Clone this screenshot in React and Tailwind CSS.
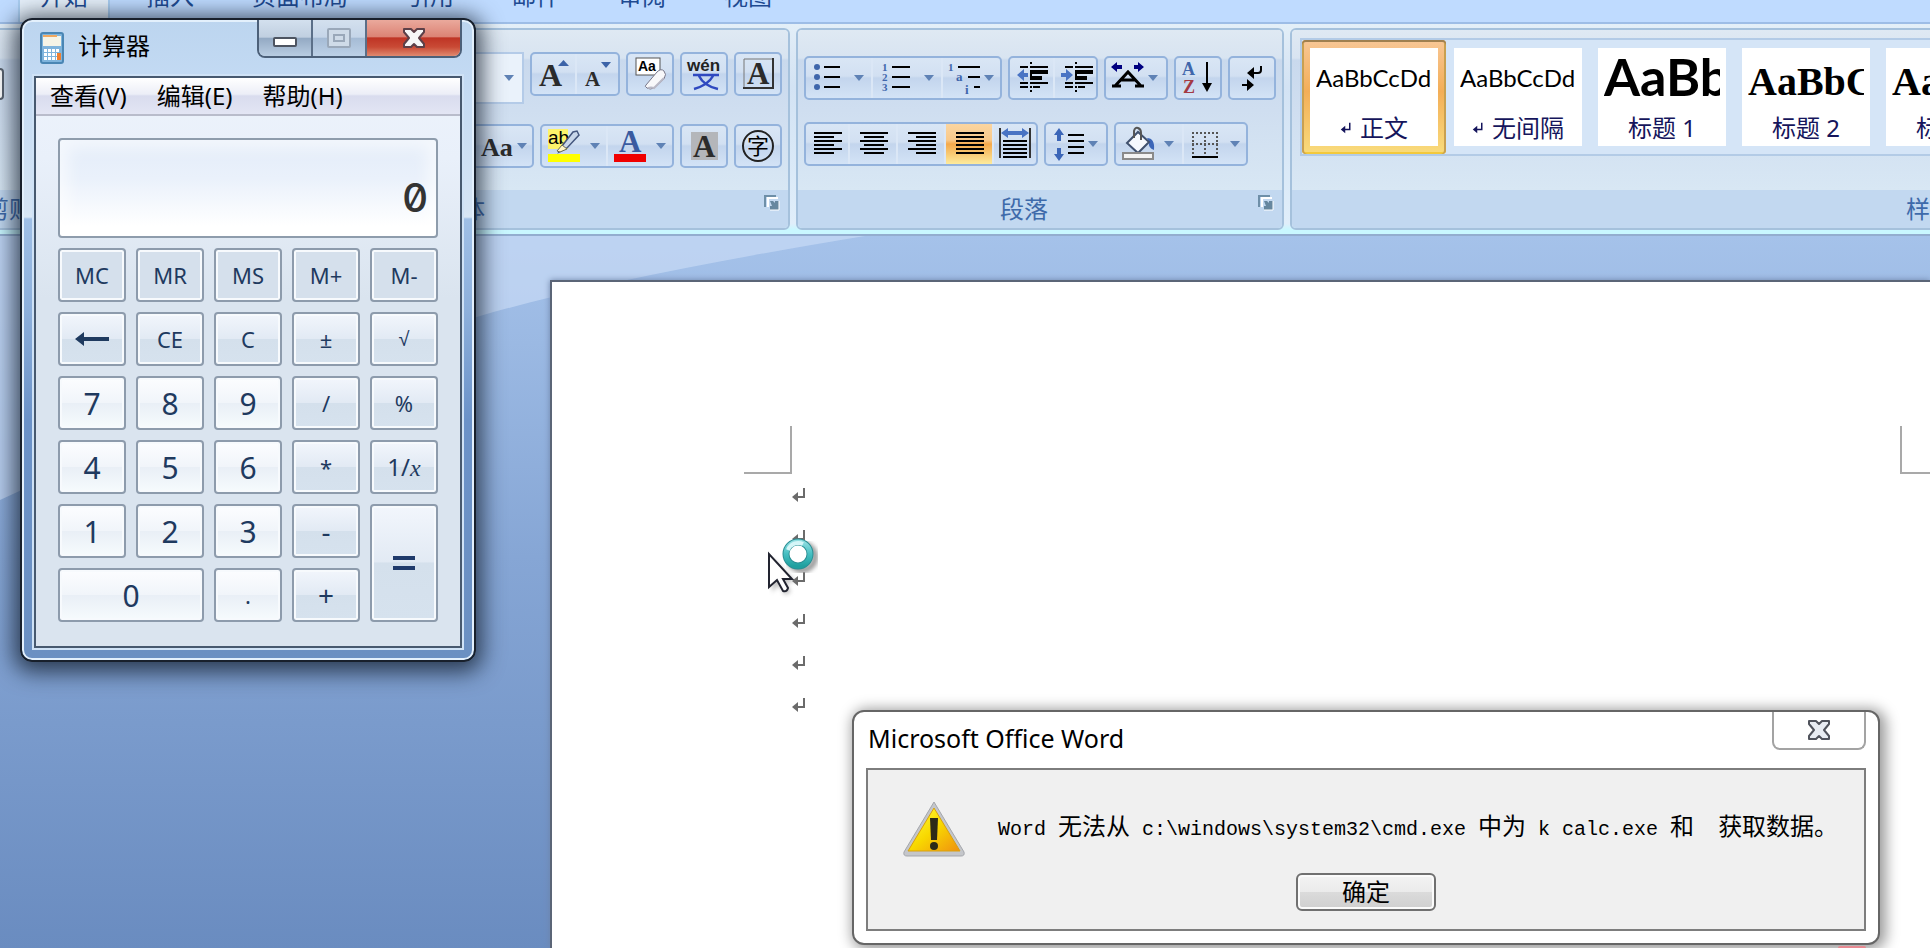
import React, { useState } from "react";

const TABS = ["开始", "插入", "页面布局", "引用", "邮件", "审阅", "视图"];

const KEYS = [
  { label: "MC", kind: "mem" },
  { label: "MR", kind: "mem" },
  { label: "MS", kind: "mem" },
  { label: "M+", kind: "mem" },
  { label: "M-", kind: "mem" },
  { label: "←", kind: "op" },
  { label: "CE", kind: "op" },
  { label: "C", kind: "op" },
  { label: "±", kind: "op" },
  { label: "√", kind: "op" },
  { label: "7", kind: "num" },
  { label: "8", kind: "num" },
  { label: "9", kind: "num" },
  { label: "/", kind: "op" },
  { label: "%", kind: "op" },
  { label: "4", kind: "num" },
  { label: "5", kind: "num" },
  { label: "6", kind: "num" },
  { label: "*", kind: "op" },
  { label: "1/x", kind: "op" },
  { label: "1", kind: "num" },
  { label: "2", kind: "num" },
  { label: "3", kind: "num" },
  { label: "-", kind: "op" },
  { label: "=", kind: "op", span: "row-span-2" },
  { label: "0", kind: "num", span: "col-span-2" },
  { label: ".", kind: "num" },
  { label: "+", kind: "op" },
];

const KEY_STYLES = {
  mem: "bg-[#d5e0ec] text-[22px]",
  op: "bg-[linear-gradient(#f2f6fc_0%,#e2eaf4_49%,#d4e0ec_50%,#d6e2ee_100%)] text-[22px]",
  num: "bg-[linear-gradient(#fcfdff_0%,#f1f5fa_49%,#e9eff6_50%,#f6fbfd_100%)] text-[30px]",
};

const STYLES = [
  { sample: "AaBbCcDd", name: "正文", mark: true, look: "text-2xl pb-1 font-['Lato',sans-serif]", selected: true },
  { sample: "AaBbCcDd", name: "无间隔", mark: true, look: "text-2xl pb-1 font-['Lato',sans-serif]" },
  { sample: "AaBbCc", name: "标题 1", look: "text-[52px] pb-2 font-bold font-['Lato',sans-serif]" },
  { sample: "AaBbCc", name: "标题 2", look: "text-[40px] pt-1 font-bold font-['Liberation_Serif',serif]" },
  { sample: "AaBbCc", name: "标题 3", look: "text-[40px] pt-1 font-bold font-['Liberation_Serif',serif]" },
];

function Cluster({ children }) {
  return (
    <div className="flex h-11 shrink-0 overflow-hidden rounded-[5px] border-2 border-[#94b3dc] bg-[linear-gradient(#d9e6f5_0%,#d2e0f2_45%,#c3d5ed_50%,#d3e3f6_100%)] divide-x-2 divide-[#dbe7f6]">
      {children}
    </div>
  );
}

function Tool({ w, label, active, children }) {
  return (
    <button
      type="button"
      aria-label={label}
      className={active ? "bg-[linear-gradient(#fbd5a0_0%,#f9c98a_40%,#f4a94c_50%,#fdeb9c_100%)]" : ""}
    >
      <svg width={w} height="40" viewBox={`0 0 ${w} 40`}>
        {children}
      </svg>
    </button>
  );
}

function Caret({ x, y = 17, fill = "#5f82b5" }) {
  return <path d={`M${x} ${y}h10l-5 6z`} fill={fill} />;
}

function Rules({ rows, color = "#000" }) {
  return (
    <g fill={color}>
      {rows.map(([x, y, w]) => (
        <rect key={`${x}-${y}`} x={x} y={y} width={w} height="2" />
      ))}
    </g>
  );
}

function Letter({ x, y, size, fill = "#2b2b2b", children }) {
  return (
    <text x={x} y={y} fontSize={size} fill={fill} fontWeight="bold" fontFamily="Liberation Serif, serif">
      {children}
    </text>
  );
}

function Launcher() {
  return (
    <button type="button" aria-label="对话框启动器">
      <svg width="16" height="16" viewBox="0 0 16 16">
        <path d="M4 12V3h10" fill="none" stroke="#fff" strokeWidth="2" />
        <path d="M1 12V1h11" fill="none" stroke="#6e8fa8" strokeWidth="2" />
        <path d="M6 6h3l2 2V6h4v9H6v-4h2z" fill="#66879f" />
        <path d="M6 15h9V6" fill="none" stroke="#fff" strokeWidth="1" />
      </svg>
    </button>
  );
}

function Group({ title, className, launcher, children }) {
  return (
    <section className={`flex shrink-0 flex-col rounded-md border-2 border-[#a5c1dc] shadow-[inset_1px_1px_0_#eef5fc] ${className}`}>
      <div className="h-40 rounded-t bg-[linear-gradient(#dfe9f3_0px,#d8e4f1_28px,#c9d9ed_30px,#cfdef0_80px,#d8e7f4_160px)]">
        {children}
      </div>
      <div className="flex h-[38px] items-center rounded-b bg-[#c2d8f0] text-2xl leading-6 text-[#3e6aaa]">
        <h2 className="flex-1 text-center">{title}</h2>
        {launcher && (
          <span className="flex w-8 justify-end pb-3 pr-2">
            <Launcher />
          </span>
        )}
      </div>
    </section>
  );
}

function FontGroup() {
  return (
    <Group title="字体" className="w-[626px]" launcher>
      <div className="flex items-start justify-end gap-1.5 px-1.5 pt-[22px]">
        <div className="flex h-[52px] w-20 items-center justify-end border-2 border-[#b4cbe8] bg-[#eaf2fb] pr-2">
          <select aria-label="字号" className="w-10 appearance-none bg-transparent" />
          <svg width="10" height="6" viewBox="0 0 10 6">
            <Caret x={0} y={0} />
          </svg>
        </div>
        <Cluster>
          <Tool w={43} label="增大字体">
            <Letter x={7} y={32} size={32}>A</Letter>
            <path d="M26 12h11l-5.500-6z" fill="#3c63a8" />
          </Tool>
          <Tool w={41} label="缩小字体">
            <Letter x={8} y={32} size={21}>A</Letter>
            <Caret x={24} y={8} fill="#3c63a8" />
          </Tool>
        </Cluster>
        <Cluster>
          <Tool w={44} label="清除格式">
            <rect x="8" y="4" width="24" height="17" fill="#fff" stroke="#555" />
            <text x="10" y="17" fontSize="14" fontWeight="bold" fontFamily="Liberation Sans, sans-serif">Aa</text>
            <path d="M18 31 29 18q4-4 7-1t0 8L26 34q-4 2-7 0t-1-3z" fill="#f8f8fa" stroke="#77778a" />
            <path d="M20 34q3-1 6 0l10-10" fill="none" stroke="#b9b9c6" strokeWidth="2" />
          </Tool>
        </Cluster>
        <Cluster>
          <Tool w={44} label="拼音指南">
            <text x="5" y="17" fontSize="17" fontWeight="bold" fontFamily="Liberation Sans, sans-serif" fill="#222">wén</text>
            <path d="M11 21h26M17 22q5 10 19 13M31 22Q26 31 12 35" fill="none" stroke="#2f49c0" strokeWidth="2.500" />
          </Tool>
        </Cluster>
        <Cluster>
          <Tool w={44} label="字符边框">
            <path d="M8 35V5h29" fill="none" stroke="#777" />
            <path d="M7 34h30V4" fill="none" stroke="#333" strokeWidth="2" />
            <Letter x={11} y={30} size={31}>A</Letter>
          </Tool>
        </Cluster>
      </div>
      <div className="flex justify-end gap-1.5 px-1.5 pt-5">
        <Cluster>
          <Tool w={58} label="更改大小写">
            <Letter x={7} y={30} size={26}>Aa</Letter>
            <Caret x={43} />
          </Tool>
        </Cluster>
        <Cluster>
          <Tool w={64} label="突出显示">
            <rect x="6" y="3" width="20" height="20" fill="#fdf36a" />
            <text x="6" y="18" fontSize="19" fontFamily="Liberation Sans, sans-serif">ab</text>
            <path d="m20 20 11-14 4-1 2 4-12 13-8 4z" fill="#c9d7ea" stroke="#45577e" strokeWidth="1.500" />
            <path d="m15 25 5-6 5 4-7 3z" fill="#fff6c8" stroke="#6a6a50" />
            <rect x="6" y="28" width="32" height="8" fill="#ff0" />
            <Caret x={48} />
          </Tool>
          <Tool w={64} label="字体颜色">
            <Letter x={11} y={26} size={31} fill="#3a5ba0">A</Letter>
            <rect x="6" y="28" width="32" height="8" fill="#f00000" />
            <Caret x={48} />
          </Tool>
        </Cluster>
        <Cluster>
          <Tool w={44} label="字符底纹">
            <rect x="9" y="6" width="27" height="28" fill="#b4b6ba" />
            <Letter x={11} y={31} size={31}>A</Letter>
          </Tool>
        </Cluster>
        <Cluster>
          <Tool w={44} label="带圈字符">
            <circle cx="22" cy="20" r="15" fill="none" stroke="#222" strokeWidth="2" />
            <text x="11" y="28" fontSize="22" fontFamily="Noto Sans CJK SC, sans-serif">字</text>
          </Tool>
        </Cluster>
      </div>
    </Group>
  );
}

function IndentLines({ children }) {
  return (
    <>
      <Rules rows={[[10, 8, 8], [20, 8, 18], [10, 24, 8], [20, 24, 18], [10, 28, 8], [23, 28, 7]]} />
      <path d="M20 12h18v4H20zM20 18h12v4H20z" />
      <path d="M21 4v31" stroke="#000" strokeWidth="2" strokeDasharray="2 2" />
      {children}
    </>
  );
}

const EVEN = [8, 16, 24];
const ODD = [12, 20, 28];

function ParagraphGroup() {
  return (
    <Group title="段落" className="w-[488px]" launcher>
      <div className="flex gap-1.5 px-1.5 pt-[26px]">
        <Cluster>
          <Tool w={65} label="项目符号">
            <g fill="#3f66ab">
              <circle cx="11" cy="9" r="3" />
              <circle cx="11" cy="19" r="3" />
              <circle cx="11" cy="29" r="3" />
            </g>
            <Rules rows={[[18, 8, 16], [18, 18, 16], [18, 28, 16]]} />
            <Caret x={48} />
          </Tool>
          <Tool w={68} label="编号">
            <Letter x={9} y={13} size={11} fill="#3f66ab">1</Letter>
            <Letter x={9} y={23} size={11} fill="#3f66ab">2</Letter>
            <Letter x={9} y={33} size={11} fill="#3f66ab">3</Letter>
            <Rules rows={[[19, 8, 18], [19, 18, 18], [19, 28, 18]]} />
            <Caret x={51} />
          </Tool>
          <Tool w={57} label="多级列表">
            <Letter x={5} y={13} size={11} fill="#3f66ab">1</Letter>
            <Letter x={13} y={23} size={13} fill="#3f66ab">a</Letter>
            <Letter x={22} y={36} size={13} fill="#3f66ab">i</Letter>
            <Rules rows={[[15, 8, 22], [25, 18, 12], [31, 28, 6]]} />
            <Caret x={41} />
          </Tool>
        </Cluster>
        <Cluster>
          <Tool w={43} label="减少缩进量">
            <IndentLines>
              <path d="m7 17 7-6v4h4v4h-4v4z" fill="#4a74c4" />
            </IndentLines>
          </Tool>
          <Tool w={41} label="增加缩进量">
            <IndentLines>
              <path d="m18 17-7-6v4H6v4h5v4z" fill="#4a74c4" />
            </IndentLines>
          </Tool>
        </Cluster>
        <Cluster>
          <Tool w={60} label="中文版式">
            <path d="m5 9 6-5v3h5v4h-5v3zM38 9l-6-5v3h-4v4h4v3z" fill="#000080" />
            <path d="M9 28 22 14l13 14M14 22h16M6 28h9M29 28h9" fill="none" stroke="#000" strokeWidth="3" />
            <Caret x={42} />
          </Tool>
        </Cluster>
        <Cluster>
          <Tool w={44} label="排序">
            <Letter x={6} y={17} size={18} fill="#3f66ab">A</Letter>
            <Letter x={7} y={35} size={18} fill="#a33a44">Z</Letter>
            <path d="M31 4v24" stroke="#000" strokeWidth="2" />
            <path d="M26 25h10l-5 9z" />
          </Tool>
        </Cluster>
        <Cluster>
          <Tool w={44} label="显示编辑标记">
            <path d="M31 8v4q0 3-3 3h-6" fill="none" stroke="#000" strokeWidth="2" />
            <path d="m17 15 7-6v12zM24 27l-7-6v12z" />
            <path d="M12 27h7" stroke="#000" strokeWidth="2" />
          </Tool>
        </Cluster>
      </div>
      <div className="flex gap-1.5 px-1.5 pt-[22px]">
        <Cluster>
          <Tool w={42} label="左对齐">
            <Rules rows={[...EVEN.map((y) => [8, y, 28]), ...ODD.map((y) => [8, y, 20])]} />
          </Tool>
          <Tool w={46} label="居中">
            <Rules rows={[...EVEN.map((y) => [10, y, 28]), ...ODD.map((y) => [14, y, 20])]} />
          </Tool>
          <Tool w={46} label="右对齐">
            <Rules rows={[...EVEN.map((y) => [10, y, 28]), ...ODD.map((y) => [18, y, 20])]} />
          </Tool>
          <Tool w={46} label="两端对齐" active>
            <Rules rows={[...EVEN, ...ODD].map((y) => [10, y, 28])} />
          </Tool>
          <Tool w={42} label="分散对齐">
            <path d="M6 4v30M36 4v30" stroke="#333" strokeWidth="2" />
            <path d="m7 9 7-5v3h14V4l7 5-7 5v-3H14v3z" fill="#4a74c4" />
            <Rules rows={[16, 20, 24, 28, 32].map((y) => [9, y, 24])} />
          </Tool>
        </Cluster>
        <Cluster>
          <Tool w={60} label="行距">
            <path d="m13 4 5 7h-3v6h-4v-6H8zM13 37l5-7h-3v-6h-4v6H8z" fill="#3c66b8" />
            <Rules rows={[10, 16, 22, 28].map((y) => [22, y, 16])} />
            <Caret x={42} />
          </Tool>
        </Cluster>
        <Cluster>
          <Tool w={66} label="底纹">
            <path d="M31 14q8 0 7 12-6-2-5-8z" fill="#3c66b8" />
            <path d="m11 19 11-11 11 10-11 11z" fill="#f6f9fd" stroke="#40516e" strokeWidth="2" />
            <path d="M18 14V7q1-4 4-3t3 5v7" fill="none" stroke="#555" strokeWidth="2" />
            <rect x="7" y="29" width="30" height="6" fill="#f3f3f3" stroke="#8a8a8a" strokeWidth="2" />
            <Caret x={48} />
          </Tool>
          <Tool w={62} label="框线">
            <path d="M8 9h26M8 20h26M9 8v24M21 8v24M33 8v24" stroke="#555" strokeWidth="2" strokeDasharray="2 2" />
            <Rules rows={[[8, 32, 26]]} />
            <Caret x={46} />
          </Tool>
        </Cluster>
      </div>
    </Group>
  );
}

function StylesGroup() {
  return (
    <Group title="样式" className="w-[1280px]">
      <div className="pl-2 pt-2">
        <div className="flex border-2 border-r-0 border-[#b3cbe6] bg-[#d5e5f7]">
          {STYLES.map((s) => (
            <button
              key={s.name}
              type="button"
              className={`w-36 shrink-0 rounded p-2 ${
                s.selected
                  ? "bg-[linear-gradient(#f8c796_0%,#f3ae58_45%,#f9dc7c_100%)] shadow-[inset_0_2px_0_#a08050,inset_2px_0_0_#c9a050,inset_-2px_0_0_#c9a050,inset_0_-2px_0_#f3c93c]"
                  : ""
              }`}
            >
              <span className="flex h-[98px] flex-col bg-white px-1.5 text-black">
                <span className={`flex h-16 items-center overflow-hidden whitespace-nowrap leading-none ${s.look}`}>
                  {s.sample}
                </span>
                <span className="flex items-center justify-center gap-2 text-2xl leading-8 text-[#15155c]">
                  {s.mark && <ReturnMark size={12} color="#15155c" />}
                  {s.name}
                </span>
              </span>
            </button>
          ))}
        </div>
      </div>
    </Group>
  );
}

function ReturnMark({ size = 16, color = "#6b6b6b" }) {
  return (
    <svg width={size} height={size} viewBox="0 0 16 16" aria-hidden="true">
      <path d="M13 1v9H5" fill="none" stroke={color} strokeWidth="2" />
      <path d="M1 10l6-5v10z" fill={color} />
    </svg>
  );
}

function Ribbon() {
  return (
    <header className="relative">
      <nav className="flex h-6 items-end overflow-hidden border-b-2 border-[#9dbde6] bg-[#bfdbff] pl-[18px]">
        {TABS.map((tab, i) => (
          <button
            key={tab}
            type="button"
            className={`shrink-0 pb-3.5 text-2xl leading-6 text-[#1e4a91] ${
              i === 0 ? "mr-3 border-x-2 border-[#a9cdf0] bg-[#e6f0fa] px-5" : "mr-2.5 px-6"
            }`}
          >
            {tab}
          </button>
        ))}
      </nav>
      <div className="flex gap-1.5 overflow-hidden border-b-2 border-[#93adcf] bg-[linear-gradient(#e3eff8_0%,#dbe8f5_15%,#d3e3f4_30%,#e0eefa_95%,#c9f7ff_98%)] pb-1 pt-1">
        <Group title="剪贴板" className="-ml-[84px] w-[242px]" launcher>
          <div className="pt-[38px]">
            <div className="h-8 w-[86px] rounded-sm border-2 border-[#59626e] bg-white" />
          </div>
        </Group>
        <FontGroup />
        <ParagraphGroup />
        <StylesGroup />
      </div>
    </header>
  );
}

function DocumentArea() {
  return (
    <main className="relative flex flex-1 bg-[linear-gradient(#a5c2ea_0%,#9bb9e3_15%,#86a6d5_45%,#6a8cc0_100%)] pl-[550px] pt-11">
      <svg className="absolute left-0 top-0" width="880" height="270" viewBox="0 0 880 270" aria-hidden="true">
        <path d="M0 0h865Q610 42 480 80 240 150 0 264z" fill="#c8daf5" fillOpacity="0.700" />
      </svg>
      <article className="relative flex-1 border-l-2 border-t-2 border-[#5b6577] bg-white pt-36 shadow-[0_0_6px_#6d84a8]">
        <div className="flex justify-between pl-48">
          <div className="size-12 border-b-2 border-r-2 border-[#a9a9a9]" />
          <div className="h-12 w-[30px] border-b-2 border-l-2 border-[#a9a9a9]" />
        </div>
        <div className="pl-[239px]">
          {[1, 2, 3, 4, 5, 6].map((line) => (
            <p key={line} className="flex h-[42px] items-center">
              <ReturnMark />
            </p>
          ))}
        </div>
      </article>
    </main>
  );
}

function CloseGlyph({ fill, stroke }) {
  return (
    <svg width="24" height="22" viewBox="0 0 24 22" aria-hidden="true">
      <path
        d="M2 2h7l3 3 3-3h7v3l-5 6 5 6v3h-7l-3-3-3 3H2v-3l5-6-5-6z"
        fill={fill}
        stroke={stroke}
        strokeWidth="2"
        strokeLinejoin="round"
      />
    </svg>
  );
}

function KeyFace({ label }) {
  if (label === "←") {
    return (
      <svg width="34" height="16" viewBox="0 0 34 16" aria-hidden="true">
        <path d="M0 8l9-7v5h25v4H9v5z" fill="#1f3a5f" />
      </svg>
    );
  }
  if (label === "=") {
    return (
      <svg width="22" height="16" viewBox="0 0 22 16" aria-hidden="true">
        <path d="M0 1h22v4H0zM0 11h22v4H0z" fill="#1f3a6b" />
      </svg>
    );
  }
  if (label === "1/x") {
    return (
      <span className="text-2xl">
        1/<i className="font-['Liberation_Serif',serif]">x</i>
      </span>
    );
  }
  if (label === "√") return <span className="text-xl font-['Liberation_Sans',sans-serif]">√</span>;
  if (label === "+" || label === "-") return <span className="text-[28px]">{label}</span>;
  if (label === ".") return <span className="text-[22px]">.</span>;
  return label;
}

function Calculator() {
  const [value, setValue] = useState("0");

  const press = (key) => {
    if (/^\d$/.test(key)) setValue((v) => (v === "0" ? key : v + key));
    else if (key === "C" || key === "CE") setValue("0");
    else if (key === "←") setValue((v) => v.slice(0, -1) || "0");
  };

  return (
    <section
      aria-label="计算器"
      className="absolute left-5 top-[18px] w-[456px] rounded-xl border-2 border-[#18202c] bg-[linear-gradient(#bcd5ef_0px,#c3daf3_60px,#d5e4f4_190px,#d9e7f5_197px,#9fbfe6_199px,#8db0dc_290px,#6b92c8_400px,#6b90c2_100%)] px-3 pb-3 shadow-[0_4px_22px_6px_rgba(15,25,40,0.75),inset_0_0_0_2px_#e3f0fc]"
    >
      <div className="flex h-14 justify-between pl-1.5">
        <div className="flex items-center gap-3.5">
          <svg width="24" height="32" viewBox="0 0 24 32" aria-hidden="true">
            <rect x="1" y="1" width="22" height="30" rx="2" fill="#7fb4dc" stroke="#4a86b4" strokeWidth="2" />
            <rect x="3" y="4" width="18" height="10" fill="#f6f4e6" />
            <path d="M3 4h14" stroke="#f0a860" strokeWidth="2" />
            <g fill="#fff">
              {[17, 21, 25].map((y) => [4, 8, 12, 16].map((x) => <rect key={`${x}-${y}`} x={x} y={y} width="3" height="3" />))}
            </g>
            <rect x="17" y="21" width="4" height="7" fill="#f08030" />
          </svg>
          <h1 className="pb-1 text-2xl leading-6 text-black">计算器</h1>
        </div>
        <div className="flex h-[38px] overflow-hidden rounded-b-lg border-2 border-t-0 border-[#4c6079] divide-x-2 divide-[#5b6f88]">
          <button type="button" aria-label="最小化" className="flex w-[54px] items-center justify-center bg-[linear-gradient(#d3e0ee_0%,#c0cfe0_48%,#93a9c3_50%,#b9cde2_100%)]">
            <span className="mt-2 h-2.5 w-6 rounded-xs border-2 border-[#4d5461] bg-white" />
          </button>
          <button type="button" aria-label="最大化" className="flex w-[54px] items-center justify-center bg-[linear-gradient(#d3e0ee_0%,#c5d5e8_48%,#a5bbd5_50%,#bdd1e7_100%)]">
            <span className="flex h-5 w-6 items-center justify-center rounded-xs border-2 border-[#9aa8b9] bg-[#cfdbe8]">
              <span className="h-2 w-3 border-2 border-[#9aa8b9]" />
            </span>
          </button>
          <button type="button" aria-label="关闭" className="flex w-[93px] items-center justify-center bg-[linear-gradient(#eaa99c_0%,#dc8375_46%,#bf3425_50%,#c94a35_75%,#e08a70_100%)]">
            <CloseGlyph fill="#f6f6f6" stroke="#5d4048" />
          </button>
        </div>
      </div>
      <div className="border-2 border-[#47596f] bg-[linear-gradient(#edf3fc_0px,#e9f0fa_80px,#dae4ef_220px)] shadow-[0_0_0_2px_#cfe2f6]">
        <div className="flex h-[38px] items-center gap-[30px] border-b-2 border-[#b9bccb] bg-[linear-gradient(#ffffff_0%,#eceef7_45%,#d9dcee_50%,#e3e5f4_100%)] pl-3.5 text-2xl leading-6 text-black">
          <button type="button">查看(V)</button>
          <button type="button">编辑(E)</button>
          <button type="button">帮助(H)</button>
        </div>
        <div className="px-[22px] pb-6 pt-[22px]">
          <output className="flex h-[100px] items-end justify-end rounded border-2 border-[#8e9cac] bg-[linear-gradient(#e3ecf9_0%,#eaf1fb_40%,#ffffff_90%)] px-2 pb-3.5 text-[40px] font-medium leading-[48px] text-[#333] shadow-[inset_0_0_16px_8px_rgba(255,255,255,0.6)] slashed-zero font-['Inter',sans-serif]">
            {value}
          </output>
          <div className="mt-2.5 grid auto-rows-[54px] grid-cols-5 gap-2.5">
            {KEYS.map((k) => (
              <button
                key={k.label}
                type="button"
                aria-label={k.label}
                onClick={() => press(k.label)}
                className={`flex items-center justify-center rounded border-2 border-[#8d9bac] text-[#1f3a5f] shadow-[inset_0_0_0_2px_#f7fafd] ${KEY_STYLES[k.kind]} ${k.span || ""}`}
              >
                <KeyFace label={k.label} />
              </button>
            ))}
          </div>
        </div>
      </div>
    </section>
  );
}

function Cjk({ children }) {
  return <span className="text-2xl leading-8">{children}</span>;
}

function AlertDialog() {
  return (
    <section
      role="alertdialog"
      aria-labelledby="alert-title"
      aria-describedby="alert-text"
      className="absolute left-[852px] top-[710px] w-[1028px] rounded-xl border-2 border-[#666] bg-white px-3 pb-3 shadow-[3px_2px_14px_3px_rgba(0,0,0,0.4)]"
    >
      <div className="flex h-14 items-start justify-between pl-0.5">
        <h2 id="alert-title" className="pt-2.5 text-[25px] leading-8 text-black">
          Microsoft Office Word
        </h2>
        <button type="button" aria-label="关闭" className="flex h-[38px] w-[94px] items-center justify-center rounded-b-lg border-2 border-t-0 border-[#a3a3a3]">
          <CloseGlyph fill="#e8ecf2" stroke="#50535c" />
        </button>
      </div>
      <div className="border-2 border-[#7d7d7d] bg-[#f0f0f0] pb-[18px] pt-[31px]">
        <div className="flex items-center gap-8 pl-[34px]">
          <svg className="shrink-0" width="64" height="56" viewBox="0 0 64 56" aria-hidden="true">
            <defs>
              <linearGradient id="warn" x1="0" y1="0" x2="1" y2="1">
                <stop offset="0" stopColor="#ffff40" />
                <stop offset="0.5" stopColor="#f8d800" />
                <stop offset="1" stopColor="#f09010" />
              </linearGradient>
            </defs>
            <path d="M32 1 62 51q1 4-3 4H5q-4 0-3-4z" fill="#c4c6ca" stroke="#a5a7ac" />
            <path d="M32 7 58 50H6z" fill="url(#warn)" stroke="#d8a010" />
            <path d="M28 17h8l-1 22h-6z" fill="#2c2a18" />
            <circle cx="32" cy="45" r="4" fill="#2c2a18" />
          </svg>
          <p id="alert-text" className="whitespace-pre text-xl leading-8 text-black font-['Liberation_Mono','Noto_Sans_CJK_SC',monospace]">
            Word <Cjk>无法从</Cjk> c:\windows\system32\cmd.exe <Cjk>中为</Cjk> k calc.exe <Cjk>和</Cjk>{"  "}
            <Cjk>获取数据。</Cjk>
          </p>
        </div>
        <div className="flex justify-center pt-4">
          <button
            type="button"
            className="h-[38px] w-[140px] rounded-md border-2 border-[#707070] bg-[linear-gradient(#f3f3f3_0%,#ebebeb_49%,#dbdbdb_50%,#cfcfcf_100%)] text-2xl leading-8 text-black shadow-[inset_0_0_0_2px_#fbfbfb]"
          >
            确定
          </button>
        </div>
      </div>
    </section>
  );
}

function BusyPointer() {
  return (
    <svg className="absolute left-[764px] top-[534px]" width="56" height="64" viewBox="0 0 56 64" aria-hidden="true">
      <defs>
        <linearGradient id="ring" x1="0" y1="0" x2="0" y2="1">
          <stop offset="0" stopColor="#8fdde0" />
          <stop offset="0.5" stopColor="#45bfc2" />
          <stop offset="1" stopColor="#1fa09f" />
        </linearGradient>
        <filter id="soft">
          <feGaussianBlur stdDeviation="2" />
        </filter>
      </defs>
      <circle cx="38" cy="23" r="13" fill="none" stroke="#999" strokeWidth="6" filter="url(#soft)" />
      <circle cx="34" cy="20" r="12" fill="#fff" stroke="#2a8f94" strokeWidth="7" />
      <circle cx="34" cy="20" r="12" fill="none" stroke="url(#ring)" strokeWidth="5" />
      <path d="M24 16a11 11 0 0 1 15-6" fill="none" stroke="#d5f6f8" strokeWidth="4" />
      <path d="M8 24v34l7-7 6 10 6-3-5-10h10z" fill="#888" opacity="0.500" filter="url(#soft)" />
      <path d="M5 20v33l8-7 6 11q4 1 5-3l-5-9h9z" fill="#fff" stroke="#222430" strokeWidth="2" />
    </svg>
  );
}

export default function App() {
  return (
    <div className="relative flex h-screen flex-col overflow-hidden font-['Noto_Sans','Noto_Sans_CJK_SC',sans-serif]">
      <Ribbon />
      <DocumentArea />
      <Calculator />
      <AlertDialog />
      <BusyPointer />
      <span className="absolute bottom-0 right-16 h-0.5 w-7 rounded-t-full bg-[#e88a92]" />
    </div>
  );
}
